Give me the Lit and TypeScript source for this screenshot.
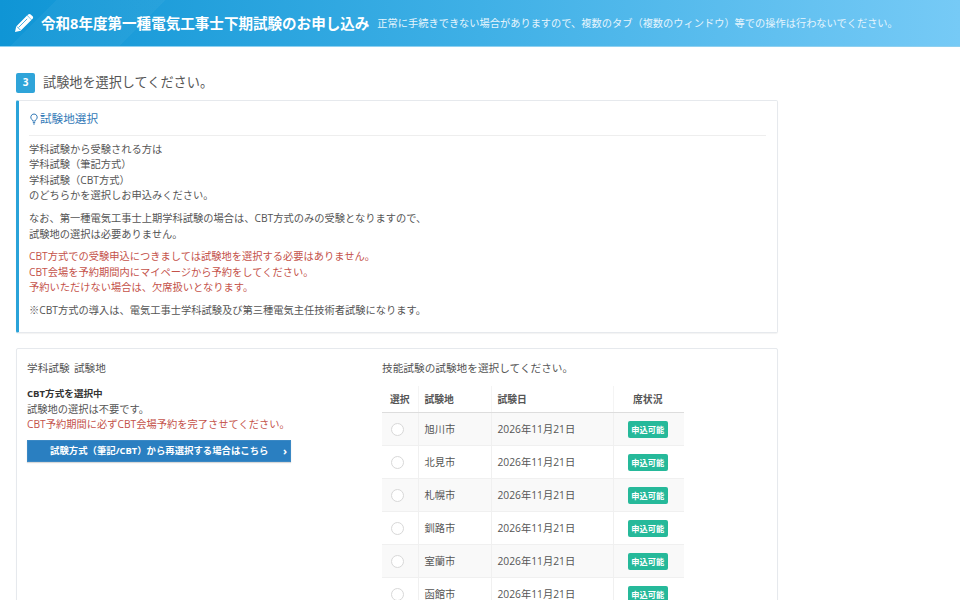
import { LitElement, html, css } from 'lit';
import { customElement } from 'lit/decorators.js';

const CITIES = ['旭川市', '北見市', '札幌市', '釧路市', '室蘭市', '函館市'];

@customElement('app-root')
export class AppRoot extends LitElement {
  static styles = css`
    :host {
      display: block;
      height: 600px;
      overflow: hidden;
      background: #fff;
      color: #555;
      font-family: 'Open Sans', 'Noto Sans CJK JP', sans-serif;
      font-size: 10.25px;
      line-height: 15.4px;
    }
    p { margin: 0; }

    .top {
      height: 47px;
      box-sizing: border-box;
      border-bottom: 1px solid #8ed0f0;
      background:
        linear-gradient(135deg, transparent 0 40px, rgba(255,255,255,.04) 40px 117px, transparent 117px 100%),
        linear-gradient(90deg, #0f95d5, #3fb0e6 50%, #76caf6);
      display: flex;
      align-items: center;
      padding-left: 14px;
      color: #fff;
    }
    .top svg { width: 20px; height: 20px; margin-right: 7px; }
    .top h1 { margin: 0; font-size: 14.56px; font-weight: 700; line-height: 20px; }
    .top span { margin-left: 8px; font-size: 10.22px; color: #e6f5fd; padding-top: 2px; }

    .content { width: 762px; margin-left: 16px; }

    .step { display: flex; align-items: center; gap: 8px; margin-top: 25px; height: 22px; }
    .num {
      width: 19px; height: 20px; border-radius: 2px;
      background: #2fa4d9; color: #fff;
      font-size: 10px; font-weight: 700;
      display: flex; align-items: center; justify-content: center;
    }
    .step h2 { margin: 0; font-size: 13.15px; font-weight: 400; color: #555; }

    .card {
      box-sizing: border-box;
      background: #fff;
      border: 1px solid #e6e9ed;
      border-radius: 2px;
      box-shadow: 0 1px 1px rgba(0,0,0,.05);
    }
    .notice {
      margin-top: 6px;
      height: 233px;
      border-left: 3px solid #2aa3d9;
      padding: 9px 11px 0 10px;
    }
    .notice h3 {
      margin: 0; padding-bottom: 8px;
      border-bottom: 1px solid #eee;
      display: flex; align-items: center; gap: 1px;
      font-size: 11.6px; font-weight: 400; color: #337ab7;
      line-height: 17px;
    }
    .notice h3 svg { width: 10px; height: 12px; }
    .notice p { margin-top: 7.5px; }
    .notice p:first-of-type { margin-top: 6px; }
    .red { color: #c4524a; }

    .panel {
      margin-top: 15px;
      height: 270px;
      padding: 12px 10px 0;
      display: flex;
    }
    .left { width: 355px; }
    .left .label { margin-bottom: 10px; font-size: 10.67px; word-spacing: 1.5px; }
    .left strong { font-size: 9.6px; font-weight: 700; color: #333; display: block; }
    .btn {
      margin-top: 7px;
      width: 264px; height: 22px;
      box-sizing: border-box;
      position: relative;
      background: #2a7fc1;
      border: 1px solid #3b88c4;
      box-shadow: 0 1px 1px rgba(0,0,0,.15);
      color: #fff;
      font-size: 9.4px; font-weight: 700;
      display: flex; align-items: center;
      padding-left: 22px;
    }
    .btn i { position: absolute; right: 3px; top: 2px; font-style: normal; font-size: 11px; }
    .right { width: 304px; }
    .right > p { font-size: 10.67px; }
    table {
      margin-top: 10px;
      width: 302px;
      border-collapse: collapse;
      table-layout: fixed;
    }
    th {
      height: 26px; padding: 0 6px;
      font-size: 9.8px; font-weight: 700; color: #555;
      text-align: left;
      border-bottom: 1px solid #ddd;
      border-left: 1px solid #f4f4f4;
    }
    th:first-child, td:first-child { border-left: none; padding: 0; text-align: center; }
    th:last-child, td:last-child { text-align: center; padding-right: 8px; padding-left: 6px; }
    td {
      height: 32px; padding: 0 6px;
      border-top: 1px solid #f0f0f0;
      border-left: 1px solid #f0f0f0;
    }
    tbody tr:nth-child(odd) { background: #f9f9f9; }
    .radio {
      display: inline-block;
      width: 11px; height: 11px;
      margin-right: 4px;
      border: 1px solid #d8d8d8; border-radius: 50%;
      background: #fff;
      vertical-align: middle;
    }
    .badge {
      display: inline-block;
      background: #26b99a; color: #fff;
      border-radius: 2px;
      width: 40px; height: 17px;
      font-size: 8.2px; font-weight: 700; line-height: 17px;
      vertical-align: middle;
    }
  `;

  render() {
    return html`
      <header class="top">
        <svg viewBox="0 0 20 20" aria-hidden="true">
          <path fill="#fff" d="M1 19l1.2-5.6L13 2.6l4.4 4.4L6.6 17.8zM14.2 1.4c.7-.7 1.8-.7 2.5 0l1.9 1.9c.7.7.7 1.8 0 2.5l-.9.9-4.4-4.4z"/>
          <path fill="none" stroke="#1c9bd8" stroke-width=".8" d="M3 13.6l3.4 3.4M4.6 14.4l8.6-8.6"/>
        </svg>
        <h1>令和8年度第一種電気工事士下期試験のお申し込み</h1>
        <span>正常に手続きできない場合がありますので、複数のタブ（複数のウィンドウ）等での操作は行わないでください。</span>
      </header>
      <main class="content">
        <div class="step">
          <div class="num">3</div>
          <h2>試験地を選択してください。</h2>
        </div>
        <section class="card notice">
          <h3>
            <svg viewBox="0 0 10 12" aria-hidden="true">
              <path fill="none" stroke="#337ab7" stroke-width="1" d="M5 1a3.2 3.2 0 0 0-2 5.7c.4.4.6.9.6 1.3h2.8c0-.4.2-.9.6-1.3A3.2 3.2 0 0 0 5 1zM3.8 9.6h2.4M4.2 11h1.6"/>
            </svg>
            試験地選択
          </h3>
          <p>学科試験から受験される方は<br />学科試験（筆記方式）<br />学科試験（CBT方式）<br />のどちらかを選択しお申込みください。</p>
          <p>なお、第一種電気工事士上期学科試験の場合は、CBT方式のみの受験となりますので、<br />試験地の選択は必要ありません。</p>
          <p class="red">CBT方式での受験申込につきましては試験地を選択する必要はありません。<br />CBT会場を予約期間内にマイページから予約をしてください。<br />予約いただけない場合は、欠席扱いとなります。</p>
          <p>※CBT方式の導入は、電気工事士学科試験及び第三種電気主任技術者試験になります。</p>
        </section>
        <section class="card panel">
          <div class="left">
            <p class="label">学科試験 試験地</p>
            <strong>CBT方式を選択中</strong>
            <p>試験地の選択は不要です。</p>
            <p class="red">CBT予約期間に必ずCBT会場予約を完了させてください。</p>
            <div class="btn">試験方式（筆記/CBT）から再選択する場合はこちら<i>›</i></div>
          </div>
          <div class="right">
            <p>技能試験の試験地を選択してください。</p>
            <table>
              <colgroup>
                <col style="width:36px" /><col style="width:73px" /><col style="width:122px" /><col />
              </colgroup>
              <thead>
                <tr><th>選択</th><th>試験地</th><th>試験日</th><th>席状況</th></tr>
              </thead>
              <tbody>
                ${CITIES.map(
                  (c) => html`<tr>
                    <td><span class="radio"></span></td>
                    <td>${c}</td>
                    <td>2026年11月21日</td>
                    <td><span class="badge">申込可能</span></td>
                  </tr>`
                )}
              </tbody>
            </table>
          </div>
        </section>
      </main>
    `;
  }
}
